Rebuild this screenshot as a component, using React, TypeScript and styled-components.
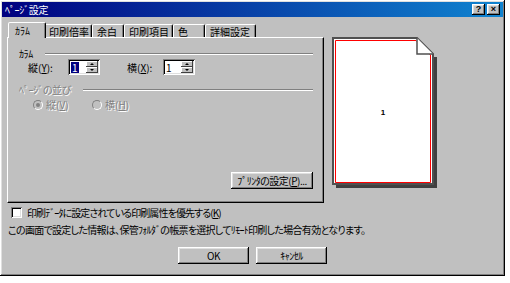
import React from 'react'
import styled, { createGlobalStyle } from 'styled-components'

const GlobalStyle = createGlobalStyle`
  body {
    margin: 0;
    background: #ffffff;
  }
`

const raised = `
  box-shadow: inset -1px -1px #000000, inset 1px 1px #ffffff,
    inset -2px -2px #808080, inset 2px 2px #dfdfdf;
`
const sunken = `
  box-shadow: inset 1px 1px #808080, inset -1px -1px #ffffff,
    inset 2px 2px #000000, inset -2px -2px #dfdfdf;
`

const tabs = [
    { label: 'ｶﾗﾑ', width: 38 },
    { label: '印刷倍率', width: 48 },
    { label: '余白', width: 32 },
    { label: '印刷項目', width: 49 },
    { label: '色', width: 32 },
    { label: '詳細設定', width: 51 },
]

export default () => {

    return (
        <>
            <GlobalStyle />
            <Dialog>
                <TitleBar>
                    <TitleText>ﾍﾟｰｼﾞ設定</TitleText>
                    <TitleButtons>
                        <TitleButton>?</TitleButton>
                        <TitleButton>×</TitleButton>
                    </TitleButtons>
                </TitleBar>
                <Body>
                    <TopRow>
                        <LeftCol>
                            <TabRow>
                                {tabs.map((t, i) => (
                                    <Tab key={t.label} active={i === 0} width={t.width}>{t.label}</Tab>
                                ))}
                            </TabRow>
                            <Panel>
                                <GroupHead>
                                    <span>ｶﾗﾑ</span>
                                    <Groove />
                                </GroupHead>
                                <SpinRow>
                                    <FieldLabel width={40}>縦(<u>Y</u>):</FieldLabel>
                                    <SpinBox>
                                        <SpinValue><Selected>1</Selected></SpinValue>
                                        <SpinButtons>
                                            <SpinBtn><Arrow up /></SpinBtn>
                                            <SpinBtn><Arrow /></SpinBtn>
                                        </SpinButtons>
                                    </SpinBox>
                                    <FieldLabel width={36} gap={27}>横(<u>X</u>):</FieldLabel>
                                    <SpinBox>
                                        <SpinValue>1</SpinValue>
                                        <SpinButtons>
                                            <SpinBtn><Arrow up /></SpinBtn>
                                            <SpinBtn><Arrow /></SpinBtn>
                                        </SpinButtons>
                                    </SpinBox>
                                </SpinRow>
                                <GroupHead disabled>
                                    <span>ﾍﾟｰｼﾞの並び</span>
                                    <Groove />
                                </GroupHead>
                                <RadioRow>
                                    <RadioItem>
                                        <Radio checked />
                                        <Disabled>縦(<u>V</u>)</Disabled>
                                    </RadioItem>
                                    <RadioItem>
                                        <Radio />
                                        <Disabled>横(<u>H</u>)</Disabled>
                                    </RadioItem>
                                </RadioRow>
                                <PanelFooter>
                                    <Button width={82}>ﾌﾟﾘﾝﾀの設定(<u>P</u>)...</Button>
                                </PanelFooter>
                            </Panel>
                        </LeftCol>
                        <Preview width="106" height="152" viewBox="0 0 106 152">
                            <rect x="4" y="20" width="101" height="131" fill="#404040" />
                            <path d="M1,1 H85 L101,17 V147 H1 Z" fill="#ffffff" stroke="#505050" strokeWidth="2" />
                            <path d="M3.5,3.5 H84 L98.5,18 V145.5 H3.5 Z" fill="none" stroke="#ff0000" strokeWidth="1" />
                            <path d="M85,1 V17 H101" fill="#ffffff" stroke="#505050" strokeWidth="1.5" />
                            <text x="51" y="78" fontSize="8" fontWeight="bold" textAnchor="middle" fontFamily="Liberation Sans, sans-serif">1</text>
                        </Preview>
                    </TopRow>
                    <CheckRow>
                        <CheckBox />
                        <span>印刷ﾃﾞｰﾀに設定されている印刷属性を優先する(<u>K</u>)</span>
                    </CheckRow>
                    <InfoText>この画面で設定した情報は、保管ﾌｫﾙﾀﾞの帳票を選択してﾘﾓｰﾄ印刷した場合有効となります。</InfoText>
                    <ButtonRow>
                        <Button width={71}>OK</Button>
                        <Button width={71}>ｷｬﾝｾﾙ</Button>
                    </ButtonRow>
                </Body>
            </Dialog>
        </>
    )
}

// STYLE PROPERTIES
const Dialog = styled.div`
    width: 505px;
    height: 276px;
    box-sizing: border-box;
    padding: 2px;
    background: #c0c0c0;
    ${raised}
    display: flex;
    flex-direction: column;
    font-family: "Noto Sans CJK JP", sans-serif;
    font-size: 10px;
    font-feature-settings: "palt";
    line-height: 11px;
    color: #000000;
`
const TitleBar = styled.div`
    height: 15px;
    display: flex;
    align-items: center;
    justify-content: space-between;
    padding: 0 3px 0 3px;
    background: linear-gradient(90deg, #000080, #1084d0);
`
const TitleText = styled.span`
    color: #ffffff;
    letter-spacing: -0.4px;
`
const TitleButtons = styled.div`
    display: flex;
    gap: 2px;
`
const TitleButton = styled.div`
    width: 13px;
    height: 11px;
    background: #c0c0c0;
    ${raised}
    display: flex;
    align-items: center;
    justify-content: center;
    font-family: "Liberation Sans", sans-serif;
    font-weight: bold;
    font-size: 9px;
`
const Body = styled.div`
    flex: 1;
    display: flex;
    flex-direction: column;
    padding: 5px 0 0 5px;
`
const TopRow = styled.div`
    display: flex;
    gap: 8px;
`
const LeftCol = styled.div`
    width: 317px;
    display: flex;
    flex-direction: column;
`
const TabRow = styled.div`
    display: flex;
    align-items: flex-end;
    height: 15px;
    padding-left: 3px;
    position: relative;
    z-index: 1;
`
const Tab = styled.div<{ active?: boolean; width: number }>`
    width: ${p => p.width}px;
    height: ${p => (p.active ? 16 : 13)}px;
    margin: ${p => (p.active ? '0 -2px -1px -2px' : '0')};
    padding: 0 ${p => (p.active ? 6 : 4)}px;
    box-sizing: border-box;
    background: #c0c0c0;
    border: 1px solid;
    border-bottom: none;
    border-color: #ffffff #000000 transparent #ffffff;
    border-radius: 2px 2px 0 0;
    box-shadow: inset -1px 0 #808080;
    display: flex;
    align-items: center;
    white-space: nowrap;
    position: relative;
    z-index: ${p => (p.active ? 1 : 0)};
`
const Panel = styled.div`
    height: 166px;
    box-sizing: border-box;
    border: 1px solid;
    border-color: #ffffff #000000 #000000 #ffffff;
    box-shadow: inset -1px -1px #808080;
    padding: 10px 10px 13px 10px;
    display: flex;
    flex-direction: column;
`
const GroupHead = styled.div<{ disabled?: boolean }>`
    display: flex;
    align-items: center;
    padding-left: 1px;
    letter-spacing: -0.4px;
    color: ${p => (p.disabled ? '#808080' : '#000000')};
    text-shadow: ${p => (p.disabled ? '1px 1px #ffffff' : 'none')};
    margin-top: ${p => (p.disabled ? 9 : 0)}px;
`
const Groove = styled.div`
    flex: 1;
    margin-left: 12px;
    border-top: 1px solid #808080;
    border-bottom: 1px solid #ffffff;
`
const SpinRow = styled.div`
    display: flex;
    align-items: center;
    padding-left: 10px;
`
const FieldLabel = styled.span<{ width: number; gap?: number }>`
    width: ${p => p.width}px;
    margin-left: ${p => p.gap || 0}px;
`
const SpinBox = styled.div`
    width: 32px;
    height: 16px;
    box-sizing: border-box;
    background: #ffffff;
    ${sunken}
    display: flex;
    padding: 2px;
`
const SpinValue = styled.div`
    flex: 1;
    padding-left: 1px;
    display: flex;
    align-items: center;
`
const Selected = styled.span`
    background: #000080;
    color: #ffffff;
    padding: 0 1px;
`
const SpinButtons = styled.div`
    width: 12px;
    display: flex;
    flex-direction: column;
`
const SpinBtn = styled.div`
    flex: 1;
    background: #c0c0c0;
    box-shadow: inset -1px -1px #404040, inset 1px 1px #ffffff;
    display: flex;
    align-items: center;
    justify-content: center;
`
const Arrow = styled.div<{ up?: boolean }>`
    width: 0;
    height: 0;
    border-left: 2px solid transparent;
    border-right: 2px solid transparent;
    ${p => (p.up ? 'border-bottom: 2px solid #000;' : 'border-top: 2px solid #000;')}
`
const RadioRow = styled.div`
    display: flex;
    padding-left: 15px;
    margin-top: 4px;
`
const RadioItem = styled.div`
    width: 59px;
    display: flex;
    align-items: center;
    gap: 3px;
`
const Radio = styled.div<{ checked?: boolean }>`
    width: 10px;
    height: 10px;
    box-sizing: border-box;
    border-radius: 50%;
    border: 1px solid;
    border-color: #808080 #ffffff #ffffff #808080;
    background: #c0c0c0;
    display: flex;
    align-items: center;
    justify-content: center;
    &::after {
        content: '';
        width: 4px;
        height: 4px;
        border-radius: 50%;
        background: ${p => (p.checked ? '#808080' : 'transparent')};
    }
`
const Disabled = styled.span`
    color: #808080;
    text-shadow: 1px 1px #ffffff;
`
const PanelFooter = styled.div`
    margin-top: auto;
    display: flex;
    justify-content: flex-end;
`
const Button = styled.div<{ width: number }>`
    width: ${p => p.width}px;
    height: 17px;
    box-sizing: border-box;
    background: #c0c0c0;
    ${raised}
    display: flex;
    align-items: center;
    justify-content: center;
    white-space: nowrap;
    letter-spacing: -0.5px;
`
const Preview = styled.svg`
    display: block;
    margin-top: 15px;
`
const CheckRow = styled.div`
    display: flex;
    align-items: center;
    gap: 5px;
    margin: 4px 0 0 4px;
    letter-spacing: -0.9px;
`
const CheckBox = styled.div`
    width: 11px;
    height: 11px;
    box-sizing: border-box;
    background: #ffffff;
    ${sunken}
`
const InfoText = styled.div`
    margin: 6px 0 0 1px;
    white-space: nowrap;
    letter-spacing: -0.7px;
`
const ButtonRow = styled.div`
    display: flex;
    justify-content: center;
    gap: 7px;
    margin-top: 12px;
    padding-right: 5px;
`
